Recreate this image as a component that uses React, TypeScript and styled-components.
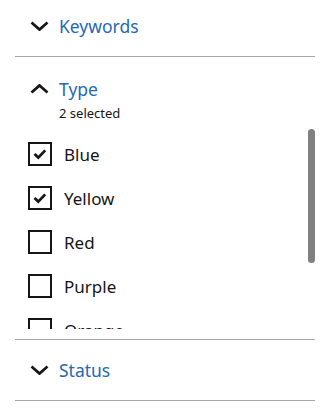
import React from "react";
import styled, { createGlobalStyle } from "styled-components";

const GlobalStyle = createGlobalStyle`
  html, body {
    margin: 0;
    padding: 0;
    background: #ffffff;
    font-family: "Noto Sans", "Open Sans", sans-serif;
    color: #161616;
  }
  * { box-sizing: border-box; }
`;

const Panel = styled.div`
  width: 330px;
  padding: 0 15px;
  margin-top: -4px;
`;

const Section = styled.section`
  border-bottom: 1px solid #a8a8a8;
`;

const Header = styled.button<{ $open?: boolean }>`
  display: flex;
  flex-direction: column;
  align-items: flex-start;
  width: 100%;
  background: none;
  border: none;
  padding: ${(p) => (p.$open ? "20px 15px 0" : "0 15px")};
  height: ${(p) => (p.$open ? "auto" : "60px")};
  justify-content: center;
  cursor: pointer;
  font-family: inherit;
  text-align: left;
`;

const TitleRow = styled.span`
  display: flex;
  align-items: center;
  gap: 10px;
  height: 24px;
`;

const Title = styled.span`
  font-size: 17.5px;
  line-height: 24px;
  color: #2569b4;
`;

const Subtitle = styled.span`
  margin: 3px 0 0 29px;
  font-size: 13px;
  line-height: 18px;
  color: #161616;
`;

const Body = styled.div`
  padding: 7px 0 10px;
`;

const ScrollArea = styled.div`
  position: relative;
  height: 200px;
  overflow: hidden;
`;

const List = styled.ul`
  list-style: none;
  margin: 0;
  padding: 3px 0 0;
`;

const Row = styled.li`
  display: flex;
  align-items: center;
  gap: 12px;
  height: 44px;
  padding-left: 13px;
`;

const Box = styled.span`
  display: flex;
  align-items: center;
  justify-content: center;
  width: 24px;
  height: 24px;
  border: 2px solid #161616;
  flex: none;
`;

const Label = styled.span`
  font-size: 17px;
  line-height: 23px;
  color: #161616;
`;

const Thumb = styled.div`
  position: absolute;
  top: 0;
  right: 0;
  width: 7px;
  height: 134px;
  border-radius: 4px;
  background: #808080;
`;

const Chevron = ({ up }: { up?: boolean }) => (
  <svg width="19" height="10" viewBox="0 0 19 10" aria-hidden="true">
    <polyline
      points={up ? "1.5,8.6 9.5,1.4 17.5,8.6" : "1.5,1.4 9.5,8.6 17.5,1.4"}
      fill="none"
      stroke="#161616"
      strokeWidth="2.7"
    />
  </svg>
);

const Check = () => (
  <svg width="20" height="20" viewBox="0 0 20 20" aria-hidden="true">
    <polyline
      points="4.5,10 8.3,13.6 15.2,6.4"
      fill="none"
      stroke="#161616"
      strokeWidth="2.8"
    />
  </svg>
);

const options = [
  { label: "Blue", checked: true },
  { label: "Yellow", checked: true },
  { label: "Red", checked: false },
  { label: "Purple", checked: false },
  { label: "Orange", checked: false },
];

export default function App() {
  return (
    <>
      <GlobalStyle />
      <Panel>
        <Section>
          <Header>
            <TitleRow>
              <Chevron />
              <Title>Keywords</Title>
            </TitleRow>
          </Header>
        </Section>
        <Section>
          <Header $open>
            <TitleRow>
              <Chevron up />
              <Title>Type</Title>
            </TitleRow>
            <Subtitle>2 selected</Subtitle>
          </Header>
          <Body>
            <ScrollArea>
              <List>
                {options.map((o) => (
                  <Row key={o.label}>
                    <Box>{o.checked && <Check />}</Box>
                    <Label>{o.label}</Label>
                  </Row>
                ))}
              </List>
              <Thumb />
            </ScrollArea>
          </Body>
        </Section>
        <Section>
          <Header>
            <TitleRow>
              <Chevron />
              <Title>Status</Title>
            </TitleRow>
          </Header>
        </Section>
      </Panel>
    </>
  );
}
